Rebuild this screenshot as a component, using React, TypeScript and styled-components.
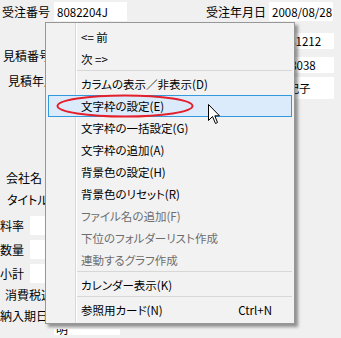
import React from "react";
import styled, { createGlobalStyle } from "styled-components";

const GlobalStyle = createGlobalStyle`
  html, body {
    margin: 0;
    padding: 0;
    background: #f0f0f0;
  }
`;

type MenuEntry =
  | { kind: "item"; label: string; shortcut?: string; active?: boolean; disabled?: boolean }
  | { kind: "sep" };

const menuEntries: MenuEntry[] = [
  { kind: "item", label: "<= 前" },
  { kind: "item", label: "次 =>" },
  { kind: "sep" },
  { kind: "item", label: "カラムの表示／非表示(D)" },
  { kind: "item", label: "文字枠の設定(E)", active: true },
  { kind: "item", label: "文字枠の一括設定(G)" },
  { kind: "item", label: "文字枠の追加(A)" },
  { kind: "item", label: "背景色の設定(H)" },
  { kind: "item", label: "背景色のリセット(R)" },
  { kind: "item", label: "ファイル名の追加(F)", disabled: true },
  { kind: "item", label: "下位のフォルダーリスト作成", disabled: true },
  { kind: "item", label: "連動するグラフ作成", disabled: true },
  { kind: "sep" },
  { kind: "item", label: "カレンダー表示(K)" },
  { kind: "sep" },
  { kind: "item", label: "参照用カード(N)", shortcut: "Ctrl+N" },
];

type LeftRow = { label: string; top: number; indent: number; field?: boolean };

const leftRows: LeftRow[] = [
  { label: "見積番号", top: 25, indent: 3 },
  { label: "見積年月日", top: 5, indent: 8 },
  { label: "会社名", top: 77, indent: 6 },
  { label: "タイトル", top: 2, indent: 7 },
  { label: "料率", top: 6, indent: 0, field: true },
  { label: "数量", top: 4, indent: 0, field: true },
  { label: "小計", top: 4, indent: 0, field: true },
  { label: "消費税込", top: 1, indent: 5 },
];

export default function App() {
  return (
    <>
      <GlobalStyle />
      <Page>
        <TopRow>
          <Label $indent={2}>受注番号</Label>
          <Field $left={4} $width={73}>8082204J</Field>
          <Label $indent={79}>受注年月日</Label>
          <Field $left={3} $width={64}>2008/08/28</Field>
        </TopRow>

        <Body>
          <LeftCol>
            {leftRows.map((r) => (
              <FormRow key={r.label} $top={r.top}>
                <Label $indent={r.indent}>{r.label}</Label>
                {r.field && <Field $left={6} $width={80} />}
              </FormRow>
            ))}
            <FormRow $top={1}>
              <Label $indent={0}>納入期日</Label>
              <ClippedField>
                <span>明</span>
              </ClippedField>
            </FormRow>
          </LeftCol>

          <RightCol>
            <Field $width={64} $height={16} $pad={0}>20081212</Field>
            <Field $width={64} $height={16} $offset={8} $pad={1}>2008038</Field>
            <Field $width={64} $height={22} $offset={4} $pad={6}>由紀子</Field>
          </RightCol>
        </Body>

        <Menu>
          <Gutter />
          {menuEntries.map((e, i) =>
            e.kind === "sep" ? (
              <Separator key={i} />
            ) : (
              <MenuItem key={i} $active={e.active} $disabled={e.disabled}>
                <span>{e.label}</span>
                {e.shortcut && <Shortcut>{e.shortcut}</Shortcut>}
              </MenuItem>
            )
          )}
        </Menu>

        <Circle width="150" height="30" viewBox="0 0 150 30">
          <ellipse cx="75" cy="15" rx="67.5" ry="10.5" fill="none" stroke="#e3202b" strokeWidth="2" />
        </Circle>

        <Cursor width="13" height="21" viewBox="0 0 13 21">
          <path
            d="M0.5 0.5 L0.5 16.5 L4.5 12.5 L7.5 19.5 L9.5 18.5 L6.8 11.8 L11.5 11.8 Z"
            fill="#fff"
            stroke="#000"
            strokeWidth="1"
            strokeLinejoin="miter"
          />
        </Cursor>
      </Page>
    </>
  );
}

const Page = styled.div`
  position: relative;
  width: 341px;
  height: 338px;
  overflow: hidden;
  box-sizing: border-box;
  padding-top: 2px;
  background: #f0f0f0;
  font-family: "Noto Sans CJK JP", sans-serif;
  font-feature-settings: "palt";
  font-size: 12px;
  color: #000;
  display: flex;
  flex-direction: column;
`;

const TopRow = styled.div`
  display: flex;
  align-items: center;
  height: 19px;
`;

const Label = styled.span<{ $indent: number }>`
  margin-left: ${(p) => p.$indent}px;
  white-space: nowrap;
  line-height: 20px;
`;

const Field = styled.div<{ $left?: number; $width: number; $height?: number; $offset?: number; $pad?: number }>`
  flex: none;
  box-sizing: border-box;
  margin-left: ${(p) => p.$left ?? 0}px;
  margin-top: ${(p) => p.$offset ?? 0}px;
  width: ${(p) => p.$width}px;
  height: ${(p) => p.$height ?? 19}px;
  padding-left: ${(p) => p.$pad ?? 3}px;
  background: #fff;
  display: flex;
  align-items: center;
  white-space: nowrap;
  overflow: hidden;
  font-size: 11.5px;
  font-feature-settings: normal;
`;

/* field scrolled mostly out of view under the menu: only the lower edge of its text shows */
const ClippedField = styled.div`
  flex: none;
  margin-left: 6px;
  margin-top: 23px;
  width: 64px;
  height: 6px;
  padding-left: 2px;
  background: #fff;
  overflow: hidden;
  white-space: nowrap;
  font-size: 12px;

  span {
    display: block;
    line-height: 12px;
    margin-top: -6px;
  }
`;

const Body = styled.div`
  display: flex;
  flex: 1;
`;

const LeftCol = styled.div`
  display: flex;
  flex-direction: column;
  flex: 1;
`;

const FormRow = styled.div<{ $top: number }>`
  display: flex;
  align-items: flex-start;
  height: 20px;
  margin-top: ${(p) => p.$top}px;
`;

const RightCol = styled.div`
  display: flex;
  flex-direction: column;
  width: 64px;
  margin-right: 7px;
  padding-top: 12px;
`;

const Menu = styled.div`
  position: absolute;
  left: 45px;
  top: 22px;
  width: 250px;
  box-sizing: border-box;
  padding: 3px 2px 2px 2px;
  background: #f2f2f2;
  border: 1px solid #979797;
  box-shadow: 3px 3px 3px rgba(0, 0, 0, 0.4);
  font-size: 11.5px;
`;

const Gutter = styled.div`
  position: absolute;
  left: 29px;
  top: 0;
  bottom: 0;
  width: 1px;
  background: #d7d7d7;
  border-right: 1px solid #fff;
`;

const MenuItem = styled.div<{ $active?: boolean; $disabled?: boolean }>`
  position: relative;
  box-sizing: border-box;
  height: 22px;
  display: flex;
  align-items: center;
  justify-content: space-between;
  padding: 0 19px 0 32px;
  border: 1px solid ${(p) => (p.$active ? "#3399dd" : "transparent")};
  background: ${(p) => (p.$active ? "#dcebfc" : "transparent")};
  color: ${(p) => (p.$disabled ? "#6d6d6d" : "#000")};
  white-space: nowrap;
`;

const Shortcut = styled.span`
  font-size: 11.5px;
`;

const Separator = styled.div`
  height: 3px;
  margin-left: 29px;
  box-sizing: border-box;
  border-top: 1px solid #d7d7d7;
`;

const Circle = styled.svg`
  position: absolute;
  left: 50px;
  top: 91px;
`;

const Cursor = styled.svg`
  position: absolute;
  left: 208px;
  top: 104px;
`;
